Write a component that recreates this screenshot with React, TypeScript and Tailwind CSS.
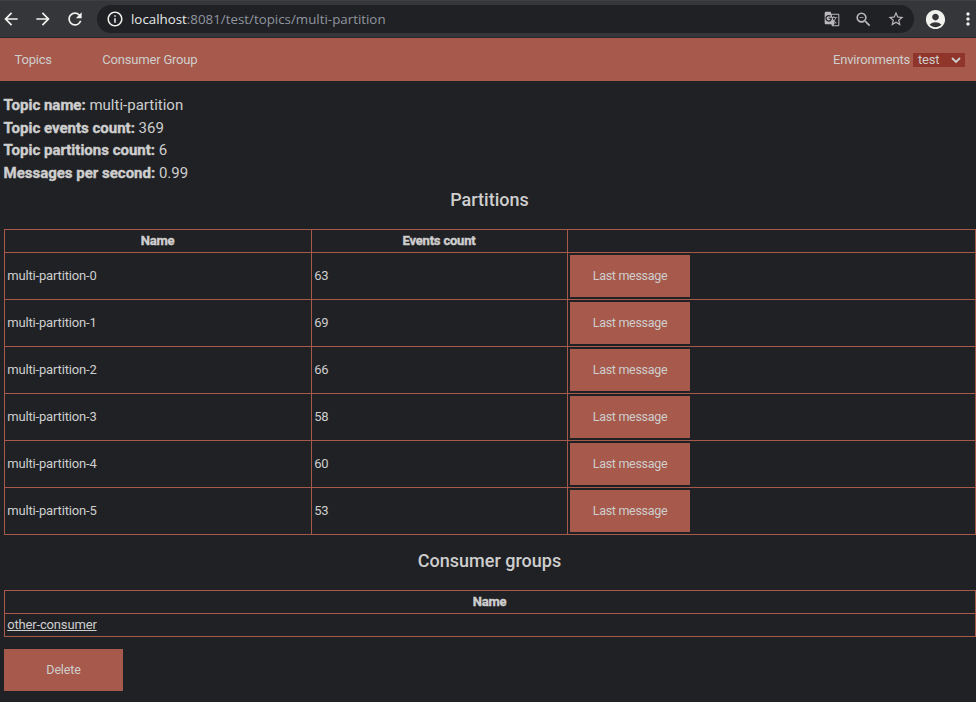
import { MdAccountCircle, MdArrowBack, MdArrowForward, MdGTranslate, MdInfoOutline, MdMoreVert, MdRefresh, MdStarBorder, MdZoomOut } from "react-icons/md";

const partitions = [
  { name: "multi-partition-0", count: 63 },
  { name: "multi-partition-1", count: 69 },
  { name: "multi-partition-2", count: 66 },
  { name: "multi-partition-3", count: 58 },
  { name: "multi-partition-4", count: 60 },
  { name: "multi-partition-5", count: 53 },
];

const details = [
  { label: "Topic name:", value: "multi-partition" },
  { label: "Topic events count:", value: "369" },
  { label: "Topic partitions count:", value: "6" },
  { label: "Messages per second:", value: "0.99" },
];

function BrowserBar() {
  return (
    <div className="flex h-[38px] items-center border-t border-b border-t-[#3e3f43] border-b-[#29292c] bg-[#35363a] tracking-normal text-[#f1f1ee]">
      <MdArrowBack className="ml-px size-5 shrink-0" />
      <MdArrowForward className="ml-3 size-5 shrink-0" />
      <MdRefresh className="ml-3 size-5 shrink-0" />
      <div className="ml-3 flex h-7 w-[817px] shrink-0 items-center rounded-full bg-[#202124] pr-[9px] pl-[9px]">
        <MdInfoOutline className="size-[18px]" />
        <span className="ml-[7px] pt-px font-['Open_Sans',sans-serif] text-[13.33px] whitespace-nowrap text-[#9095a0]">
          <span className="text-[#e8eaed]">localhost</span>:8081/test/topics/multi-partition
        </span>
        <span className="ml-auto flex items-center text-[#bab8bc]">
          <MdGTranslate className="size-4" />
          <MdZoomOut className="ml-3.5 size-[19px]" />
          <MdStarBorder className="ml-3.5 size-[18px]" />
        </span>
      </div>
      <MdAccountCircle className="ml-[10px] size-[23px] shrink-0" />
      <MdMoreVert className="ml-[11px] size-5 shrink-0" />
    </div>
  );
}

function Navigation() {
  return (
    <nav className="flex h-[43px] items-center bg-[#a7594b] pr-[11px] pl-[14.5px] tracking-[-0.2px]">
      <a>Topics</a>
      <a className="ml-[50.5px]">Consumer Group</a>
      <label className="ml-auto">Environments</label>
      <button className="ml-[3px] flex h-[14px] w-[52px] items-center justify-between bg-[#8f3529] pr-1 pl-[5px]">
        <span>test</span>
        <svg viewBox="0 0 10 8" className="h-2 w-2.5" fill="none" stroke="currentColor" strokeWidth="1.8">
          <path d="M1 2l4 4 4-4" />
        </svg>
      </button>
    </nav>
  );
}

export default function App() {
  return (
    <div className="h-[702px] w-[976px] overflow-hidden bg-[#202124] font-[Roboto,sans-serif] text-[13px] tracking-[-0.16px] text-[#cecece]">
      <BrowserBar />
      <Navigation />
      <main className="pl-1">
        <section className="-ml-[0.5px] pt-[13px] text-[15px] leading-[22.5px] tracking-normal">
          {details.map((item) => (
            <div key={item.label}>
              <b className="[-webkit-text-stroke:0.4px]">{item.label}</b> {item.value}
            </div>
          ))}
        </section>
        <h2 className="h-[45px] pt-[2px] pr-px text-center text-[18px] leading-[27px] font-medium tracking-normal">Partitions</h2>
        <section className="border-t border-l border-[#a7594b]">
          <div className="grid h-[23px] grid-cols-[307px_256px_408px] text-center leading-[22px] font-bold tracking-[-0.2px] [-webkit-text-stroke:0.4px] *:border-r *:border-b *:border-[#a7594b] *:pr-px">
            <div>Name</div>
            <div>Events count</div>
            <div />
          </div>
          {partitions.map((item) => (
            <div key={item.name} className="grid h-[47px] grid-cols-[307px_256px_408px] leading-[46px] *:border-r *:border-b *:border-[#a7594b]">
              <div className="pl-[2.2px]">{item.name}</div>
              <div className="pl-[2.2px]">{item.count}</div>
              <div className="flex items-center pl-[2px]">
                <button className="h-[42px] w-[120px] bg-[#a7594b] text-[12.5px] leading-[42px] tracking-[-0.3px]">Last message</button>
              </div>
            </div>
          ))}
        </section>
        <h2 className="h-[55px] pt-[12px] pr-px text-center text-[18px] leading-[27px] font-medium tracking-normal">Consumer groups</h2>
        <section className="border-t border-l border-[#a7594b] leading-[22px]">
          <div className="h-[23px] border-r border-b border-[#a7594b] pr-px text-center font-bold tracking-[-0.2px] [-webkit-text-stroke:0.4px]">Name</div>
          <div className="h-[23px] border-r border-b border-[#a7594b] pl-[2.2px]">
            <a className="underline">other-consumer</a>
          </div>
        </section>
        <button className="mt-3 block h-[42px] w-[119px] bg-[#a7594b] text-[12.5px] leading-[42px]">Delete</button>
      </main>
    </div>
  );
}
